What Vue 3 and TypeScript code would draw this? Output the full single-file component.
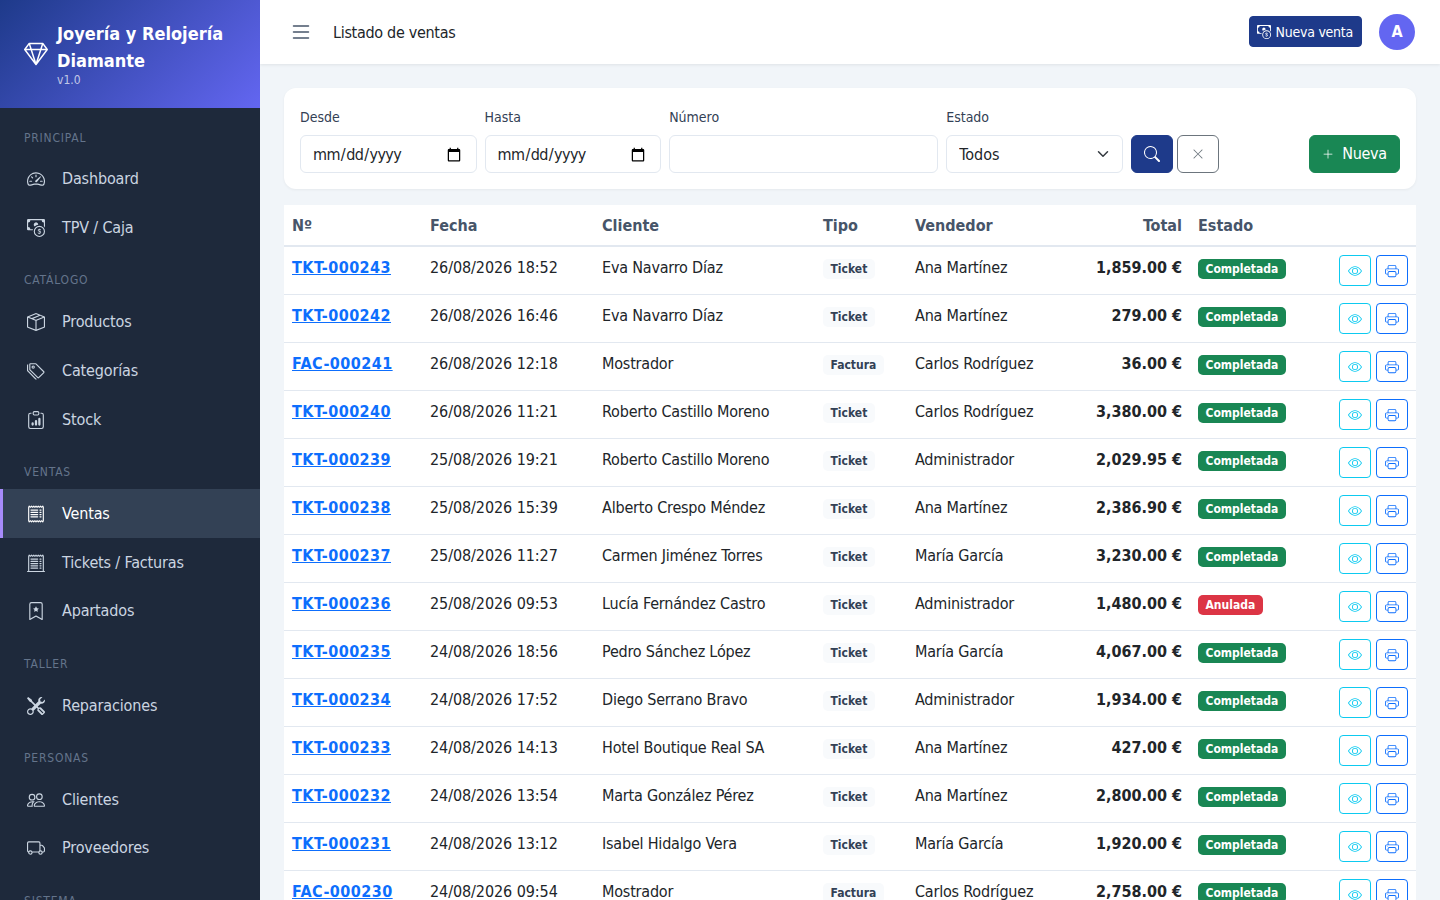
<script setup lang="ts">
const icons: Record<string, string[]> = {
  gem: ['M3.1.7a.5.5 0 0 1 .4-.2h9a.5.5 0 0 1 .4.2l2.976 3.974c.149.185.156.45.01.644L8.4 15.3a.5.5 0 0 1-.8 0L.1 5.3a.5.5 0 0 1 0-.6zm11.386 3.785-1.806-2.41-.776 2.413zm-3.633.004.961-2.989H4.186l.963 2.995zM5.47 5.495 8 13.366l2.532-7.876zm-1.371-.999-.78-2.422-1.818 2.425zM1.499 5.5l5.113 6.817-2.192-6.82zm7.889 6.817 5.123-6.83-2.928.002z'],
  speed: ['M8 4a.5.5 0 0 1 .5.5V6a.5.5 0 0 1-1 0V4.5A.5.5 0 0 1 8 4M3.732 5.732a.5.5 0 0 1 .707 0l.915.914a.5.5 0 1 1-.708.708l-.914-.915a.5.5 0 0 1 0-.707M2 10a.5.5 0 0 1 .5-.5h1.586a.5.5 0 0 1 0 1H2.5A.5.5 0 0 1 2 10m9.5 0a.5.5 0 0 1 .5-.5h1.5a.5.5 0 0 1 0 1H12a.5.5 0 0 1-.5-.5m.754-4.246a.39.39 0 0 0-.527-.02L7.547 9.31a.91.91 0 1 0 1.302 1.258l3.434-4.297a.39.39 0 0 0-.029-.518z', 'M0 10a8 8 0 1 1 15.547 2.661c-.442 1.253-1.845 1.602-2.932 1.25C11.309 13.488 9.475 13 8 13c-1.474 0-3.31.488-4.615.911-1.087.352-2.49.003-2.932-1.25A8 8 0 0 1 0 10m8-7a7 7 0 0 0-6.603 9.329c.203.575.923.876 1.68.63C4.397 12.533 6.358 12 8 12s3.604.532 4.923.96c.757.245 1.477-.056 1.68-.631A7 7 0 0 0 8 3'],
  cash: ['M11 15a4 4 0 1 0 0-8 4 4 0 0 0 0 8m5-4a5 5 0 1 1-10 0 5 5 0 0 1 10 0', 'M9.438 11.944c.047.596.518 1.06 1.363 1.116v.44h.375v-.443c.875-.061 1.386-.529 1.386-1.207 0-.618-.39-.936-1.09-1.1l-.296-.07v-1.2c.376.043.614.248.671.532h.658c-.047-.575-.54-1.024-1.329-1.073V8.5h-.375v.45c-.747.073-1.255.522-1.255 1.158 0 .562.378.92 1.007 1.066l.248.061v1.272c-.384-.058-.639-.27-.696-.563h-.668zm1.36-1.354c-.369-.085-.569-.26-.569-.522 0-.294.216-.514.572-.578v1.1zm.432.746c.449.104.655.272.655.569 0 .339-.257.571-.709.614v-1.195z', 'M1 0a1 1 0 0 0-1 1v8a1 1 0 0 0 1 1h4.083q.088-.517.258-1H3a2 2 0 0 0-2-2V3a2 2 0 0 0 2-2h10a2 2 0 0 0 2 2v3.528c.38.34.717.728 1 1.154V1a1 1 0 0 0-1-1z', 'M9.998 5.083 10 5a2 2 0 1 0-3.132 1.65 6 6 0 0 1 3.13-1.567'],
  box: ['M8.186 1.113a.5.5 0 0 0-.372 0L1.846 3.5l2.404.961L10.404 2zm3.564 1.426L5.596 5 8 5.961 14.154 3.5zm3.25 1.7-6.5 2.6v7.922l6.5-2.6V4.24zM7.5 14.762V6.838L1 4.239v7.925zM7.443.184a1.5 1.5 0 0 1 1.114 0l7.129 2.852A.5.5 0 0 1 16 3.5v8.662a1 1 0 0 1-.629.928l-7.185 2.874a.5.5 0 0 1-.372 0L.63 13.09a1 1 0 0 1-.63-.928V3.5a.5.5 0 0 1 .314-.464z'],
  tags: ['M3 2v4.586l7 7L14.586 9l-7-7zM2 2a1 1 0 0 1 1-1h4.586a1 1 0 0 1 .707.293l7 7a1 1 0 0 1 0 1.414l-4.586 4.586a1 1 0 0 1-1.414 0l-7-7A1 1 0 0 1 2 6.586z', 'M5.5 5a.5.5 0 1 1 0-1 .5.5 0 0 1 0 1m0 1a1.5 1.5 0 1 0 0-3 1.5 1.5 0 0 0 0 3M1 7.086a1 1 0 0 0 .293.707L8.75 15.25l-.043.043a1 1 0 0 1-1.414 0l-7-7A1 1 0 0 1 0 7.586V3a1 1 0 0 1 1-1z'],
  clip: ['M4 11a1 1 0 1 1 2 0v1a1 1 0 1 1-2 0zm6-4a1 1 0 1 1 2 0v5a1 1 0 1 1-2 0zM7 9a1 1 0 0 1 2 0v3a1 1 0 1 1-2 0z', 'M4 1.5H3a2 2 0 0 0-2 2V14a2 2 0 0 0 2 2h10a2 2 0 0 0 2-2V3.5a2 2 0 0 0-2-2h-1v1h1a1 1 0 0 1 1 1V14a1 1 0 0 1-1 1H3a1 1 0 0 1-1-1V3.5a1 1 0 0 1 1-1h1z', 'M9.5 1a.5.5 0 0 1 .5.5v1a.5.5 0 0 1-.5.5h-3a.5.5 0 0 1-.5-.5v-1a.5.5 0 0 1 .5-.5zm-3-1A1.5 1.5 0 0 0 5 1.5v1A1.5 1.5 0 0 0 6.5 4h3A1.5 1.5 0 0 0 11 2.5v-1A1.5 1.5 0 0 0 9.5 0z'],
  receipt: ['M1.92.506a.5.5 0 0 1 .434.14L3 1.293l.646-.647a.5.5 0 0 1 .708 0L5 1.293l.646-.647a.5.5 0 0 1 .708 0L7 1.293l.646-.647a.5.5 0 0 1 .708 0L9 1.293l.646-.647a.5.5 0 0 1 .708 0l.646.647.646-.647a.5.5 0 0 1 .708 0l.646.647.646-.647a.5.5 0 0 1 .801.13l.5 1A.5.5 0 0 1 15 2v12a.5.5 0 0 1-.053.224l-.5 1a.5.5 0 0 1-.8.13L13 14.707l-.646.647a.5.5 0 0 1-.708 0L11 14.707l-.646.647a.5.5 0 0 1-.708 0L9 14.707l-.646.647a.5.5 0 0 1-.708 0L7 14.707l-.646.647a.5.5 0 0 1-.708 0L5 14.707l-.646.647a.5.5 0 0 1-.708 0L3 14.707l-.646.647a.5.5 0 0 1-.801-.13l-.5-1A.5.5 0 0 1 1 14V2a.5.5 0 0 1 .053-.224l.5-1a.5.5 0 0 1 .367-.27m.217 1.338L2 2.118v11.764l.137.274.51-.51a.5.5 0 0 1 .707 0l.646.647.646-.646a.5.5 0 0 1 .708 0l.646.646.646-.646a.5.5 0 0 1 .708 0l.646.646.646-.646a.5.5 0 0 1 .708 0l.646.646.646-.646a.5.5 0 0 1 .708 0l.646.646.646-.646a.5.5 0 0 1 .708 0l.509.509.137-.274V2.118l-.137-.274-.51.51a.5.5 0 0 1-.707 0L12 1.707l-.646.647a.5.5 0 0 1-.708 0L10 1.707l-.646.647a.5.5 0 0 1-.708 0L8 1.707l-.646.647a.5.5 0 0 1-.708 0L6 1.707l-.646.647a.5.5 0 0 1-.708 0L4 1.707l-.646.647a.5.5 0 0 1-.708 0z', 'M3 4.5a.5.5 0 0 1 .5-.5h6a.5.5 0 1 1 0 1h-6a.5.5 0 0 1-.5-.5m0 2a.5.5 0 0 1 .5-.5h6a.5.5 0 1 1 0 1h-6a.5.5 0 0 1-.5-.5m0 2a.5.5 0 0 1 .5-.5h6a.5.5 0 1 1 0 1h-6a.5.5 0 0 1-.5-.5m0 2a.5.5 0 0 1 .5-.5h6a.5.5 0 0 1 0 1h-6a.5.5 0 0 1-.5-.5m8-6a.5.5 0 0 1 .5-.5h1a.5.5 0 0 1 0 1h-1a.5.5 0 0 1-.5-.5m0 2a.5.5 0 0 1 .5-.5h1a.5.5 0 0 1 0 1h-1a.5.5 0 0 1-.5-.5m0 2a.5.5 0 0 1 .5-.5h1a.5.5 0 0 1 0 1h-1a.5.5 0 0 1-.5-.5m0 2a.5.5 0 0 1 .5-.5h1a.5.5 0 0 1 0 1h-1a.5.5 0 0 1-.5-.5'],
  cutoff: ['M3 4.5a.5.5 0 0 1 .5-.5h6a.5.5 0 1 1 0 1h-6a.5.5 0 0 1-.5-.5m0 2a.5.5 0 0 1 .5-.5h6a.5.5 0 1 1 0 1h-6a.5.5 0 0 1-.5-.5m0 2a.5.5 0 0 1 .5-.5h6a.5.5 0 1 1 0 1h-6a.5.5 0 0 1-.5-.5m0 2a.5.5 0 0 1 .5-.5h6a.5.5 0 0 1 0 1h-6a.5.5 0 0 1-.5-.5m0 2a.5.5 0 0 1 .5-.5h6a.5.5 0 0 1 0 1h-6a.5.5 0 0 1-.5-.5M11.5 4a.5.5 0 0 0 0 1h1a.5.5 0 0 0 0-1zm0 2a.5.5 0 0 0 0 1h1a.5.5 0 0 0 0-1zm0 2a.5.5 0 0 0 0 1h1a.5.5 0 0 0 0-1zm0 2a.5.5 0 0 0 0 1h1a.5.5 0 0 0 0-1zm0 2a.5.5 0 0 0 0 1h1a.5.5 0 0 0 0-1z', 'M2.354.646a.5.5 0 0 0-.801.13l-.5 1A.5.5 0 0 0 1 2v13H.5a.5.5 0 0 0 0 1h15a.5.5 0 0 0 0-1H15V2a.5.5 0 0 0-.053-.224l-.5-1a.5.5 0 0 0-.8-.13L13 1.293l-.646-.647a.5.5 0 0 0-.708 0L11 1.293l-.646-.647a.5.5 0 0 0-.708 0L9 1.293 8.354.646a.5.5 0 0 0-.708 0L7 1.293 6.354.646a.5.5 0 0 0-.708 0L5 1.293 4.354.646a.5.5 0 0 0-.708 0L3 1.293zm-.217 1.198.51.51a.5.5 0 0 0 .707 0L4 1.707l.646.647a.5.5 0 0 0 .708 0L6 1.707l.646.647a.5.5 0 0 0 .708 0L8 1.707l.646.647a.5.5 0 0 0 .708 0L10 1.707l.646.647a.5.5 0 0 0 .708 0L12 1.707l.646.647a.5.5 0 0 0 .708 0l.509-.51.137.274V15H2V2.118z'],
  bookmark: ['M7.84 4.1a.178.178 0 0 1 .32 0l.634 1.285a.18.18 0 0 0 .134.098l1.42.206c.145.021.204.2.098.303L9.42 6.993a.18.18 0 0 0-.051.158l.242 1.414a.178.178 0 0 1-.258.187l-1.27-.668a.18.18 0 0 0-.165 0l-1.27.668a.178.178 0 0 1-.257-.187l.242-1.414a.18.18 0 0 0-.05-.158l-1.03-1.001a.178.178 0 0 1 .098-.303l1.42-.206a.18.18 0 0 0 .134-.098z', 'M2 2a2 2 0 0 1 2-2h8a2 2 0 0 1 2 2v13.5a.5.5 0 0 1-.777.416L8 13.101l-5.223 2.815A.5.5 0 0 1 2 15.5zm2-1a1 1 0 0 0-1 1v12.566l4.723-2.482a.5.5 0 0 1 .554 0L13 14.566V2a1 1 0 0 0-1-1z'],
  tools: ['M1 0 0 1l2.2 3.081a1 1 0 0 0 .815.419h.07a1 1 0 0 1 .708.293l2.675 2.675-2.617 2.654A3.003 3.003 0 0 0 0 13a3 3 0 1 0 5.878-.851l2.654-2.617.968.968-.305.914a1 1 0 0 0 .242 1.023l3.27 3.27a.997.997 0 0 0 1.414 0l1.586-1.586a.997.997 0 0 0 0-1.414l-3.27-3.27a1 1 0 0 0-1.023-.242L10.5 9.5l-.96-.96 2.68-2.643A3.005 3.005 0 0 0 16 3q0-.405-.102-.777l-2.14 2.141L12 4l-.364-1.757L13.777.102a3 3 0 0 0-3.675 3.68L7.462 6.46 4.793 3.793a1 1 0 0 1-.293-.707v-.071a1 1 0 0 0-.419-.814zm9.646 10.646a.5.5 0 0 1 .708 0l2.914 2.915a.5.5 0 0 1-.707.707l-2.915-2.914a.5.5 0 0 1 0-.708M3 11l.471.242.529.026.287.445.445.287.026.529L5 13l-.242.471-.026.529-.445.287-.287.445-.529.026L3 15l-.471-.242L2 14.732l-.287-.445L1.268 14l-.026-.529L1 13l.242-.471.026-.529.445-.287.287-.445.529-.026z'],
  people: ['M15 14s1 0 1-1-1-4-5-4-5 3-5 4 1 1 1 1zm-7.978-1L7 12.996c.001-.264.167-1.03.76-1.72C8.312 10.629 9.282 10 11 10c1.717 0 2.687.63 3.24 1.276.593.69.758 1.457.76 1.72l-.008.002-.014.002zM11 7a2 2 0 1 0 0-4 2 2 0 0 0 0 4m3-2a3 3 0 1 1-6 0 3 3 0 0 1 6 0M6.936 9.28a6 6 0 0 0-1.23-.247A7 7 0 0 0 5 9c-4 0-5 3-5 4q0 1 1 1h4.216A2.24 2.24 0 0 1 5 13c0-1.01.377-2.042 1.09-2.904.243-.294.526-.569.846-.816M4.92 10A5.5 5.5 0 0 0 4 13H1c0-.26.164-1.03.76-1.724.545-.636 1.492-1.256 3.16-1.275ZM1.5 5.5a3 3 0 1 1 6 0 3 3 0 0 1-6 0m3-2a2 2 0 1 0 0 4 2 2 0 0 0 0-4'],
  truck: ['M0 3.5A1.5 1.5 0 0 1 1.5 2h9A1.5 1.5 0 0 1 12 3.5V5h1.02a1.5 1.5 0 0 1 1.17.563l1.481 1.85a1.5 1.5 0 0 1 .329.938V10.5a1.5 1.5 0 0 1-1.5 1.5H14a2 2 0 1 1-4 0H5a2 2 0 1 1-3.998-.085A1.5 1.5 0 0 1 0 10.5zm1.294 7.456A2 2 0 0 1 4.732 11h5.536a2 2 0 0 1 .732-.732V3.5a.5.5 0 0 0-.5-.5h-9a.5.5 0 0 0-.5.5v7a.5.5 0 0 0 .294.456M12 10a2 2 0 0 1 1.732 1h.768a.5.5 0 0 0 .5-.5V8.35a.5.5 0 0 0-.11-.312l-1.48-1.85A.5.5 0 0 0 13.02 6H12zm-9 1a1 1 0 1 0 0 2 1 1 0 0 0 0-2m9 0a1 1 0 1 0 0 2 1 1 0 0 0 0-2'],
  list: ['M2.5 12a.5.5 0 0 1 .5-.5h10a.5.5 0 0 1 0 1H3a.5.5 0 0 1-.5-.5m0-4a.5.5 0 0 1 .5-.5h10a.5.5 0 0 1 0 1H3a.5.5 0 0 1-.5-.5m0-4a.5.5 0 0 1 .5-.5h10a.5.5 0 0 1 0 1H3a.5.5 0 0 1-.5-.5'],
  search: ['M11.742 10.344a6.5 6.5 0 1 0-1.397 1.398h-.001q.044.06.098.115l3.85 3.85a1 1 0 0 0 1.415-1.414l-3.85-3.85a1 1 0 0 0-.115-.1zM12 6.5a5.5 5.5 0 1 1-11 0 5.5 5.5 0 0 1 11 0'],
  x: ['M2.146 2.854a.5.5 0 1 1 .708-.708L8 7.293l5.146-5.147a.5.5 0 0 1 .708.708L8.707 8l5.147 5.146a.5.5 0 0 1-.708.708L8 8.707l-5.146 5.147a.5.5 0 0 1-.708-.708L7.293 8z'],
  plus: ['M8 2a.5.5 0 0 1 .5.5v5h5a.5.5 0 0 1 0 1h-5v5a.5.5 0 0 1-1 0v-5h-5a.5.5 0 0 1 0-1h5v-5A.5.5 0 0 1 8 2'],
  eye: ['M16 8s-3-5.5-8-5.5S0 8 0 8s3 5.5 8 5.5S16 8 16 8M1.173 8a13 13 0 0 1 1.66-2.043C4.12 4.668 5.88 3.5 8 3.5s3.879 1.168 5.168 2.457A13 13 0 0 1 14.828 8q-.086.13-.195.288c-.335.48-.83 1.12-1.465 1.755C11.879 11.332 10.119 12.5 8 12.5s-3.879-1.168-5.168-2.457A13 13 0 0 1 1.172 8z', 'M8 5.5a2.5 2.5 0 1 0 0 5 2.5 2.5 0 0 0 0-5M4.5 8a3.5 3.5 0 1 1 7 0 3.5 3.5 0 0 1-7 0'],
  printer: ['M2.5 8a.5.5 0 1 0 0-1 .5.5 0 0 0 0 1', 'M5 1a2 2 0 0 0-2 2v2H2a2 2 0 0 0-2 2v3a2 2 0 0 0 2 2h1v1a2 2 0 0 0 2 2h6a2 2 0 0 0 2-2v-1h1a2 2 0 0 0 2-2V7a2 2 0 0 0-2-2h-1V3a2 2 0 0 0-2-2zM4 3a1 1 0 0 1 1-1h6a1 1 0 0 1 1 1v2H4zm1 5a2 2 0 0 0-2 2v1H2a1 1 0 0 1-1-1V7a1 1 0 0 1 1-1h12a1 1 0 0 1 1 1v3a1 1 0 0 1-1 1h-1v-1a2 2 0 0 0-2-2zm7 2v3a1 1 0 0 1-1 1H5a1 1 0 0 1-1-1v-3a1 1 0 0 1 1-1h6a1 1 0 0 1 1 1'],
}

interface NavItem { label: string; icon: string; active?: boolean }
interface NavSection { title: string; items: NavItem[] }

const sections: NavSection[] = [
  { title: 'Principal', items: [{ label: 'Dashboard', icon: 'speed' }, { label: 'TPV / Caja', icon: 'cash' }] },
  { title: 'Catálogo', items: [{ label: 'Productos', icon: 'box' }, { label: 'Categorías', icon: 'tags' }, { label: 'Stock', icon: 'clip' }] },
  { title: 'Ventas', items: [{ label: 'Ventas', icon: 'receipt', active: true }, { label: 'Tickets / Facturas', icon: 'cutoff' }, { label: 'Apartados', icon: 'bookmark' }] },
  { title: 'Taller', items: [{ label: 'Reparaciones', icon: 'tools' }] },
  { title: 'Personas', items: [{ label: 'Clientes', icon: 'people' }, { label: 'Proveedores', icon: 'truck' }] },
  { title: 'Sistema', items: [] },
]

const sales = [
  ['TKT-000243', '26/08/2026 18:52', 'Eva Navarro Díaz', 'Ticket', 'Ana Martínez', '1,859.00 €', 'Completada'],
  ['TKT-000242', '26/08/2026 16:46', 'Eva Navarro Díaz', 'Ticket', 'Ana Martínez', '279.00 €', 'Completada'],
  ['FAC-000241', '26/08/2026 12:18', 'Mostrador', 'Factura', 'Carlos Rodríguez', '36.00 €', 'Completada'],
  ['TKT-000240', '26/08/2026 11:21', 'Roberto Castillo Moreno', 'Ticket', 'Carlos Rodríguez', '3,380.00 €', 'Completada'],
  ['TKT-000239', '25/08/2026 19:21', 'Roberto Castillo Moreno', 'Ticket', 'Administrador', '2,029.95 €', 'Completada'],
  ['TKT-000238', '25/08/2026 15:39', 'Alberto Crespo Méndez', 'Ticket', 'Ana Martínez', '2,386.90 €', 'Completada'],
  ['TKT-000237', '25/08/2026 11:27', 'Carmen Jiménez Torres', 'Ticket', 'María García', '3,230.00 €', 'Completada'],
  ['TKT-000236', '25/08/2026 09:53', 'Lucía Fernández Castro', 'Ticket', 'Administrador', '1,480.00 €', 'Anulada'],
  ['TKT-000235', '24/08/2026 18:56', 'Pedro Sánchez López', 'Ticket', 'María García', '4,067.00 €', 'Completada'],
  ['TKT-000234', '24/08/2026 17:52', 'Diego Serrano Bravo', 'Ticket', 'Administrador', '1,934.00 €', 'Completada'],
  ['TKT-000233', '24/08/2026 14:13', 'Hotel Boutique Real SA', 'Ticket', 'Ana Martínez', '427.00 €', 'Completada'],
  ['TKT-000232', '24/08/2026 13:54', 'Marta González Pérez', 'Ticket', 'Ana Martínez', '2,800.00 €', 'Completada'],
  ['TKT-000231', '24/08/2026 13:12', 'Isabel Hidalgo Vera', 'Ticket', 'María García', '1,920.00 €', 'Completada'],
  ['FAC-000230', '24/08/2026 09:54', 'Mostrador', 'Factura', 'Carlos Rodríguez', '2,758.00 €', 'Completada'],
]
</script>

<template>
  <div class="app">
    <aside class="sidebar">
      <div class="brand">
        <svg class="bi brand-icon" viewBox="0 0 16 16" fill="currentColor"><path v-for="d in icons.gem" :key="d" :d="d" /></svg>
        <div class="brand-text">
          <div class="brand-name">Joyería y Relojería Diamante</div>
          <div class="brand-version">v1.0</div>
        </div>
      </div>
      <nav class="nav">
        <section v-for="s in sections" :key="s.title" class="nav-section">
          <div class="nav-title">{{ s.title }}</div>
          <a v-for="item in s.items" :key="item.label" class="nav-item" :class="{ active: item.active }">
            <span class="nav-icon">
              <svg class="bi" viewBox="0 0 16 16" fill="currentColor"><path v-for="d in icons[item.icon]" :key="d" :d="d" /></svg>
            </span>
            <span class="nav-label">{{ item.label }}</span>
          </a>
        </section>
      </nav>
    </aside>

    <div class="main">
      <header class="topbar">
        <svg class="bi menu-icon" viewBox="0 0 16 16" fill="currentColor"><path v-for="d in icons.list" :key="d" :d="d" /></svg>
        <div class="page-title">Listado de ventas</div>
        <button class="new-sale">
          <svg class="bi" viewBox="0 0 16 16" fill="currentColor"><path v-for="d in icons.cash" :key="d" :d="d" /></svg>
          <span>Nueva venta</span>
        </button>
        <div class="avatar">A</div>
      </header>

      <div class="content">
        <form class="filters" @submit.prevent>
          <div class="field date"><label>Desde</label><input type="date" class="control" /></div>
          <div class="field date"><label>Hasta</label><input type="date" class="control" /></div>
          <div class="field number"><label>Número</label><input type="text" class="control" /></div>
          <div class="field state">
            <label>Estado</label>
            <div class="select-wrap">
              <select class="control"><option>Todos</option></select>
              <svg class="select-chevron" viewBox="0 0 16 16" fill="none" stroke="currentColor" stroke-width="2" stroke-linecap="round" stroke-linejoin="round"><path d="m2 5 6 6 6-6" /></svg>
            </div>
          </div>
          <button class="btn-search">
            <svg class="bi" viewBox="0 0 16 16" fill="currentColor"><path v-for="d in icons.search" :key="d" :d="d" /></svg>
          </button>
          <button class="btn-clear">
            <svg class="bi" viewBox="0 0 16 16" fill="currentColor"><path v-for="d in icons.x" :key="d" :d="d" /></svg>
          </button>
          <button class="btn-new">
            <svg class="bi" viewBox="0 0 16 16" fill="currentColor"><path v-for="d in icons.plus" :key="d" :d="d" /></svg>
            <span>Nueva</span>
          </button>
        </form>

        <table class="sales">
          <colgroup>
            <col class="c1" /><col class="c2" /><col class="c3" /><col class="c4" /><col class="c5" /><col class="c6" /><col class="c7" /><col class="c8" />
          </colgroup>
          <thead>
            <tr>
              <th>Nº</th><th>Fecha</th><th>Cliente</th><th>Tipo</th><th>Vendedor</th><th class="right">Total</th><th>Estado</th><th></th>
            </tr>
          </thead>
          <tbody>
            <tr v-for="r in sales" :key="r[0]">
              <td><a class="sale-link">{{ r[0] }}</a></td>
              <td class="date-cell">{{ r[1] }}</td>
              <td>{{ r[2] }}</td>
              <td><span class="badge type">{{ r[3] }}</span></td>
              <td>{{ r[4] }}</td>
              <td class="right total">{{ r[5] }}</td>
              <td><span class="badge" :class="r[6] === 'Anulada' ? 'bad' : 'good'">{{ r[6] }}</span></td>
              <td class="actions">
                <button class="act view"><svg class="bi" viewBox="0 0 16 16" fill="currentColor"><path v-for="d in icons.eye" :key="d" :d="d" /></svg></button>
                <button class="act print"><svg class="bi" viewBox="0 0 16 16" fill="currentColor"><path v-for="d in icons.printer" :key="d" :d="d" /></svg></button>
              </td>
            </tr>
          </tbody>
        </table>
      </div>
    </div>
  </div>
</template>

<style>
html, body { margin: 0; height: 100%; overflow: hidden; }
</style>

<style scoped>
.app {
  display: flex;
  height: 900px;
  overflow: hidden;
  background: #f1f5f9;
  color: #212529;
  font-family: "DejaVu Sans Condensed", "Noto Sans", sans-serif;
  font-size: 16px;
  line-height: 24px;
}
.bi { display: block; width: 1em; height: 1em; flex: none; }

.sidebar { width: 260px; flex: none; background: #1e293b; height: 900px; overflow: hidden; }
.brand {
  height: 108px;
  box-sizing: border-box;
  padding: 0 24px;
  display: flex;
  align-items: center;
  gap: 9px;
  color: #fff;
  background: linear-gradient(135deg, #1e3a8a, #6366f1);
}
.brand-icon { font-size: 24px; }
.brand-text { padding-top: 1px; }
.brand-name { font-size: 18px; line-height: 27px; font-weight: 700; }
.brand-version { font-size: 12px; line-height: 18px; margin-top: -3px; color: rgba(255, 255, 255, 0.7); }
.nav { padding-top: 20.5px; }
.nav-section { margin-bottom: 19.16px; }
.nav-title {
  padding-left: 24px;
  font-size: 12px;
  line-height: 18px;
  letter-spacing: 0.8px;
  text-transform: uppercase;
  color: #64748b;
  margin-bottom: 8.3px;
}
.nav-item {
  display: flex;
  align-items: center;
  height: 48.75px;
  padding-left: 24px;
  box-sizing: border-box;
  color: #cbd5e1;
}
.nav-label { letter-spacing: -0.15px; }
.nav-item.active { background: #334155; color: #fff; border-left: 3px solid #a78bfa; padding-left: 21px; }
.nav-icon { width: 38px; flex: none; padding-left: 3px; box-sizing: border-box; font-size: 18px; }

.main { flex: 1; min-width: 0; height: 900px; overflow: hidden; }
.topbar {
  height: 64px;
  background: #fff;
  box-shadow: 0 1px 3px rgba(0, 0, 0, 0.08);
  display: flex;
  align-items: center;
  padding: 0 25px 0 29px;
  position: relative;
}
.menu-icon { font-size: 24px; color: #475569; }
.page-title { margin-left: 20px; flex: 1; padding-top: 2px; color: #212529; letter-spacing: -0.3px; }
.new-sale {
  display: flex;
  align-items: center;
  gap: 5px;
  height: 31px;
  margin-top: -1px;
  padding: 0 8px 0 7px;
  border: 1px solid #1e3a8a;
  border-radius: 4px;
  background: #1e3a8a;
  color: #fff;
  font: inherit;
  font-size: 14px;
  letter-spacing: -0.25px;
}
.avatar {
  width: 36px;
  height: 36px;
  margin-left: 17px;
  border-radius: 50%;
  background: #6366f1;
  color: #fff;
  font-weight: 700;
  display: flex;
  align-items: center;
  justify-content: center;
}
.content { padding: 24px; }
.filters {
  display: flex;
  align-items: flex-end;
  gap: 8px;
  padding: 18px 16px 16px;
  background: #fff;
  border-radius: 12px;
  box-shadow: 0 1px 3px rgba(0, 0, 0, 0.05);
}
.field label { display: block; font-size: 14px; line-height: 21px; padding-top: 1px; margin-bottom: 7px; color: #334155; }
.date { width: 176.6px; }
.number { width: 269px; }
.state { width: 177px; }
.control {
  display: block;
  width: 100%;
  height: 38px;
  box-sizing: border-box;
  padding: 2px 12px 0;
  border: 1px solid #e2e8f0;
  border-radius: 6px;
  background: #fff;
  color: #212529;
  font: inherit;
}
input[type="date"].control { letter-spacing: -0.6px; padding-left: 11px; padding-right: 12px; }
select.control { appearance: none; }
.select-wrap { position: relative; }
.select-chevron { position: absolute; right: 14px; top: 13px; width: 12px; height: 12px; color: #343a40; pointer-events: none; }
.btn-search, .btn-clear, .btn-new {
  height: 38px;
  box-sizing: border-box;
  border-radius: 6px;
  display: flex;
  align-items: center;
  justify-content: center;
  font: inherit;
}
.btn-search { width: 42px; background: #1e3a8a; border: 1px solid #1e3a8a; color: #fff; }
.btn-clear { width: 42px; margin-left: -4px; background: #fff; border: 1px solid #6c757d; color: #6c757d; font-size: 12px; }
.btn-new { margin-left: auto; width: 91px; gap: 8px; background: #198754; border: 1px solid #198754; color: #fff; letter-spacing: -0.3px; }
.btn-new .bi { font-size: 12px; }

.sales {
  width: 1132px;
  margin-top: 16px;
  table-layout: fixed;
  border-collapse: separate;
  border-spacing: 0;
  background: #fff;
}
.c1 { width: 138px; } .c2 { width: 172px; } .c3 { width: 221px; } .c4 { width: 92px; }
.c5 { width: 153px; } .c6 { width: 130px; } .c7 { width: 140px; } .c8 { width: 86px; }
th {
  height: 42px;
  box-sizing: border-box;
  padding: 9px 8px 7px;
  text-align: left;
  vertical-align: top;
  color: #475569;
  font-weight: 700;
  border-bottom: 2px solid #e2e8f0;
}
td {
  height: 48px;
  box-sizing: border-box;
  padding: 9px 8px 7px;
  vertical-align: top;
  border-bottom: 1px solid #e2e8f0;
  white-space: nowrap;
  letter-spacing: -0.2px;
}
.date-cell { letter-spacing: -0.08px; }
.right { text-align: right; }
.total { font-weight: 700; letter-spacing: 0; }
.sale-link { color: #0d6efd; font-weight: 700; text-decoration: underline; letter-spacing: 0.45px; }
.badge {
  display: inline-block;
  padding: 4px 7.5px 3px;
  border-radius: 5px;
  font-size: 12px;
  line-height: 13px;
  font-weight: 700;
  letter-spacing: 0;
}
.badge.type { background: #f8fafc; color: #334155; }
.badge.good { background: #198754; color: #fff; }
.badge.bad { background: #dc3545; color: #fff; }
td.actions { text-align: right; padding-top: 8px; padding-bottom: 8px; }
.act {
  display: inline-flex;
  width: 32px;
  height: 31px;
  align-items: center;
  justify-content: center;
  padding: 0;
  background: #fff;
  border-radius: 4px;
  font-size: 14px;
  vertical-align: top;
}
.act + .act { margin-left: 5px; }
.act.view { border: 1px solid #0dcaf0; color: #0dcaf0; }
.act.print { border: 1px solid #0d6efd; color: #0d6efd; }
</style>
